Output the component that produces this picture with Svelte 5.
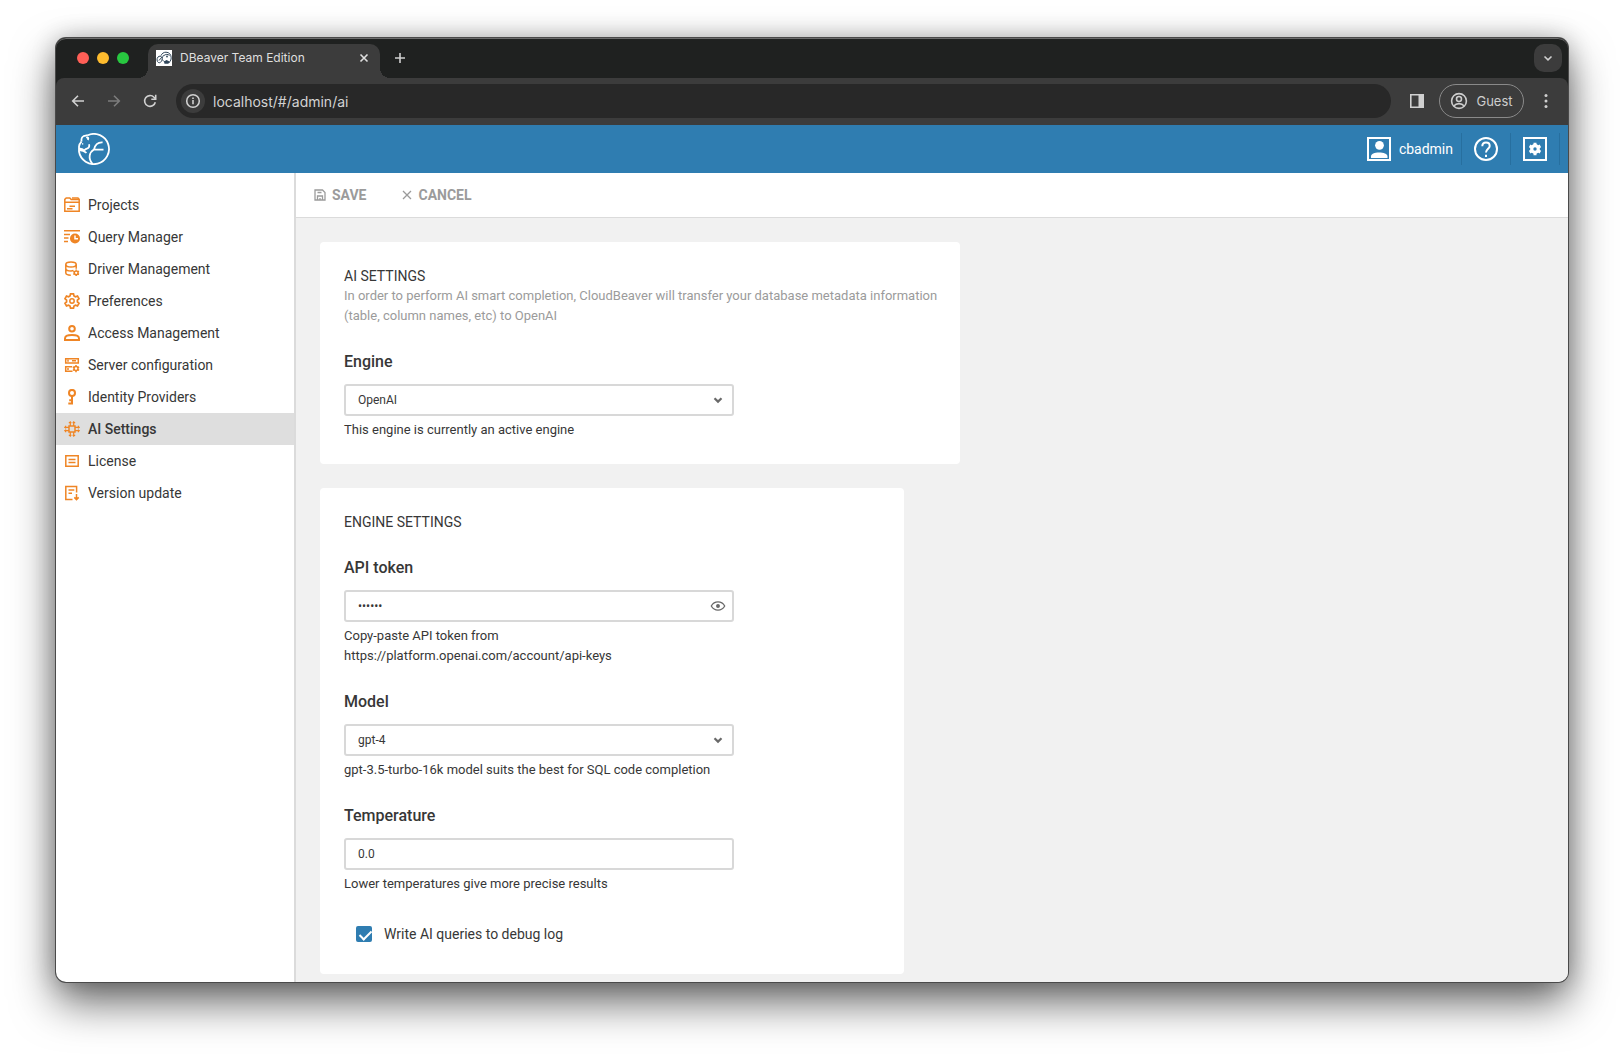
<script lang="ts">
  interface NavItem {
    label: string;
    icon: string;
  }

  const navItems: NavItem[] = [
    { label: "Projects", icon: "projects" },
    { label: "Query Manager", icon: "query" },
    { label: "Driver Management", icon: "driver" },
    { label: "Preferences", icon: "preferences" },
    { label: "Access Management", icon: "access" },
    { label: "Server configuration", icon: "server" },
    { label: "Identity Providers", icon: "identity" },
    { label: "AI Settings", icon: "ai" },
    { label: "License", icon: "license" },
    { label: "Version update", icon: "version" },
  ];

  let active = $state("AI Settings");
  let engine = $state("OpenAI");
  let token = $state("secret");
  let showToken = $state(false);
  let model = $state("gpt-4");
  let temperature = $state("0.0");
  let debugLog = $state(true);

  const select = (event: MouseEvent, label: string) => {
    event.preventDefault();
    active = label;
  };
</script>

{#snippet navIcon(name: string)}
  <svg class="nav-icon" viewBox="0 0 16 16" aria-hidden="true">
    {#if name === "projects"}
      <path d="M.8 14.2V2.4L2.2 1h3.6l1.4 1.6h8v11.6z" />
      <path d="M.8 5.2h14.4M8 1h6l1.2 1.6M5.5 9.2h5.5M3 11.8h5.5" />
    {:else if name === "query"}
      <path d="M0 1.7h16M0 5.5h6M0 9h4.5M0 12.5h4" />
      <circle class="solid" cx="11" cy="9.5" r="5" />
      <path class="cut" d="M11 6.5v3.3h3" />
    {:else if name === "driver"}
      <ellipse cx="7" cy="3.4" rx="5.2" ry="2.5" />
      <path d="M1.8 3.4v8.4c0 1.4 2.2 2.4 5 2.4M12.2 3.4v4.4M1.8 7.4c0 1.4 2.3 2.5 5.2 2.5 1 0 1.8-.1 2.5-.4" />
      <circle cx="12.2" cy="11.8" r="1.9" />
      <path d="M12.2 8.6v1M12.2 14v1M9.3 10.3l1 .5M14 13l1 .5M9.3 13.4l1-.5M14 10.7l1-.5" />
    {:else if name === "preferences"}
      <path stroke-width="1.7" d="M6.5.9h3l.5 2.1 1.4.8 2.1-.7 1.5 2.6-1.6 1.5v1.6l1.6 1.5-1.5 2.6-2.1-.7-1.4.8-.5 2.1h-3L6 13l-1.400-.8-2.100.7L1 10.300l1.600-1.500V7.200L1 5.700l1.500-2.600 2.100.7L6 3z" />
      <circle cx="8" cy="8" r="2.2" />
    {:else if name === "access"}
      <circle cx="8" cy="3.8" r="2.8" stroke-width="2" />
      <path stroke-width="2" d="M1 15v-1.6c0-2.2 3.200-3.400 7-3.400s7 1.200 7 3.400V15z" />
    {:else if name === "server"}
      <path d="M1.7 1.7h12.6v4.200H1.7zM8.5 14.2H1.7V9.8h6.5M8 3.8h4M4 2.8v2M4 11v2" />
      <circle cx="12" cy="11.6" r="2" />
      <path d="M12 8v1.4M12 14v1.3M8.9 9.8l1.3.7M13.8 12.7l1.3.7M8.9 13.4l1.3-.7M13.8 10.5l1.3-.7" />
    {:else if name === "identity"}
      <circle cx="8" cy="3.9" r="3" stroke-width="2" />
      <path stroke-width="2" d="M8 7v8.6M8 14.4H4.3M8 11.2H5.2" />
    {:else if name === "ai"}
      <path d="M5 5h6v6H5z" />
      <path
        stroke-width="1.2"
        d="M6.300 5V.2M9.700 5V.2M4.800 1.600h2.600M8.600 1.600h2.600M6.300 11v4.800M9.700 11v4.800M4.800 14.400h2.600M8.600 14.400h2.600M5 6.300H.2M5 9.700H.2M1.600 4.800v2.600M1.600 8.600v2.600M11 6.300h4.800M11 9.700h4.800M14.400 4.800v2.600M14.400 8.600v2.600"
      />
    {:else if name === "license"}
      <path d="M1.8 2.8h12.4v10.4H1.8zM4.5 6.5h7M4.5 9.4h7" />
    {:else}
      <path d="M8.5 14.5H1.8V1.5h10.8v6M4.5 5h5.8M4.5 8.2H8M12.5 9v5.600M10.3 12.4l2.2 2.2 2.2-2.2" />
    {/if}
  </svg>
{/snippet}

{#snippet chevron()}
  <svg class="field-icon" viewBox="0 0 16 16" aria-hidden="true">
    <path d="M4.5 6.2 8 9.6l3.5-3.4" fill="none" stroke="#696969" stroke-width="2.2" />
  </svg>
{/snippet}

<div class="desktop">
  <div class="window">
    <div class="tab-strip">
      <div class="lights">
        <button class="light close" aria-label="Close window"></button>
        <button class="light minimize" aria-label="Minimize window"></button>
        <button class="light zoom" aria-label="Zoom window"></button>
      </div>
      <div class="tab">
        <svg class="favicon" viewBox="0 0 16 16" aria-hidden="true">
          <path d="M0 0h16v16H0z" fill="#fff" />
          <g fill="none" stroke="#30465a" stroke-width="1">
            <path d="M5 5.6C5.8 3.5 7.7 2.2 10 2.2c3.3 0 5.2 2.6 5.2 5.6 0 1.6-.6 3-1.7 4.2" />
            <path d="M6.2 7.6C5.2 6 3.2 5.7 2 7c-1.4 1.5-1.3 4.6.4 5.5 1.5.8 3-.6 3.5-2.3.5-1.9.6-3.7 1.7-5" />
            <path d="M8 5.5c1.4-1.3 4-1.6 5.5 0M6.5 9.5c.8 1.8 2 2.7 3.5 2.5M3 10.5l3-3.5" />
          </g>
          <path d="M8 11.5l2.5-1.5 2.5 1.2 1 1.3-2 1.3H8.5z" fill="#30465a" />
          <circle cx="11" cy="6.5" r=".9" fill="#30465a" />
        </svg>
        <span class="tab-title">DBeaver Team Edition</span>
        <button class="tab-close" aria-label="Close tab">
          <svg viewBox="0 0 16 16"><path d="m4.5 4.5 7 7m0-7-7 7" /></svg>
        </button>
      </div>
      <button class="new-tab" aria-label="New tab">
        <svg viewBox="0 0 16 16"><path d="M8 3v10M3 8h10" /></svg>
      </button>
      <button class="tab-search" aria-label="Search tabs">
        <svg viewBox="0 0 16 16"><path d="m4.5 6.5 3.5 3.3 3.5-3.3" /></svg>
      </button>
    </div>

    <div class="toolbar">
      <button class="tool" aria-label="Back">
        <svg viewBox="0 0 16 16"><path d="M14 8H3M8 2.7 2.7 8 8 13.3" /></svg>
      </button>
      <button class="tool muted" aria-label="Forward">
        <svg viewBox="0 0 16 16"><path d="M2 8h11M8 2.7 13.3 8 8 13.3" /></svg>
      </button>
      <button class="tool" aria-label="Reload">
        <svg viewBox="0 0 16 16">
          <path d="M13.3 9.2A5.4 5.4 0 1 1 12 4.3l1.6 1.6" />
          <path d="M13.7 1.8v4.4H9.3" />
        </svg>
      </button>
      <div class="omnibox">
        <button class="site-info" aria-label="View site information">
          <svg viewBox="0 0 16 16">
            <circle cx="8" cy="8" r="6.3" />
            <path d="M8 7v4.2M8 4.4v1.6" />
          </svg>
        </button>
        <input class="url" type="text" aria-label="Address" value="localhost/#/admin/ai" />
      </div>
      <button class="side-panel" aria-label="Side panel">
        <svg viewBox="0 0 16 16">
          <path d="M1.8 1.8h12.4v12.4H1.8z" />
          <path d="M9.5 1.5h5v13h-5z" fill="currentColor" stroke="none" />
        </svg>
      </button>
      <button class="guest">
        <svg viewBox="0 0 18 18" aria-hidden="true">
          <circle cx="9" cy="9" r="7.4" />
          <circle cx="9" cy="7" r="2.5" />
          <path d="M3.8 14c1.4-1.7 3-2.4 5.2-2.4s3.8.7 5.2 2.4" />
        </svg>
        Guest
      </button>
      <button class="menu" aria-label="Menu">
        <svg viewBox="0 0 16 16">
          <circle cx="8" cy="2.6" r="1.5" />
          <circle cx="8" cy="8" r="1.5" />
          <circle cx="8" cy="13.4" r="1.5" />
        </svg>
      </button>
    </div>

    <header class="app-header">
      <a class="logo" href="#/" aria-label="Home">
        <svg viewBox="0 0 32 32" aria-hidden="true">
          <path d="M9.800 2.200A15.100 15.100 0 1 1 1 18.500V13.500C1.200 11.500 2.300 9.800 3.500 8.600" />
          <path d="M3.500 8.600C3.200 6 3.800 4 5.500 3.200L9.800 2.200M8.400 5c1.600-1.300 2.500.2 1.400 1.900" />
          <path d="M4.200 10.900h1M1 15.300l3.600.9 1.200 1.400M11 11.300c.8 2.200-.2 4.100-2.800 4.600l-2.400 1.700M1.200 17c3 .2 5.400 1.200 7.300 2.900" />
          <path d="M24.600 9.400c-4.700-.3-7.500 2.200-8.600 7.100-4.700 2.700-6.300 8.800-1.400 14.600M15.500 16.700h10" />
        </svg>
      </a>
      <div class="account">
        <button class="user">
          <svg viewBox="0 0 24 24" aria-hidden="true">
            <path d="M1 1h22v22H1z" fill="none" stroke="currentColor" stroke-width="2" />
            <circle cx="12.5" cy="8.3" r="4.4" fill="currentColor" />
            <path d="M4 21v-1.5C4 16.8 7.5 15.5 12 15.5s8.5 1.3 8.5 4V21z" fill="currentColor" />
          </svg>
          cbadmin
        </button>
        <button class="header-button" aria-label="Help">
          <svg viewBox="0 0 24 24" fill="none" stroke="currentColor" stroke-width="2">
            <circle cx="12" cy="12" r="11" />
            <path d="M8.3 9.3C8.3 6.9 9.9 5.6 12 5.6s3.7 1.3 3.7 3.4c0 2.7-3.7 3-3.7 6.6M12 17.8v2.2" />
          </svg>
        </button>
        <button class="header-button" aria-label="Administration">
          <svg viewBox="0 0 24 24">
            <path d="M1 1h22v22H1z" fill="none" stroke="currentColor" stroke-width="2" />
            <circle cx="12" cy="12" r="3.3" fill="none" stroke="currentColor" stroke-width="3.2" />
            <path d="M12 5.8v12.4M6.6 8.9l10.8 6.2M6.6 15.1l10.8-6.2" stroke="currentColor" stroke-width="3" />
            <circle cx="12" cy="12" r="1.7" fill="#2f7db1" />
          </svg>
        </button>
      </div>
    </header>

    <div class="body">
      <nav class="sidebar" aria-label="Administration">
        {#each navItems as item}
          <a
            href="#/admin"
            class="nav-item"
            class:active={item.label === active}
            aria-current={item.label === active ? "page" : undefined}
            onclick={(event) => select(event, item.label)}
          >
            {@render navIcon(item.icon)}
            {item.label}
          </a>
        {/each}
      </nav>

      <main class="main">
        <div class="actions">
          <button class="action">
            <svg viewBox="0 0 12 12" aria-hidden="true">
              <path d="M1 1h7.500L11 3.500V11H1zM3.500 11V7h5v4M3.500 3.500h4M6 9v2" />
            </svg>
            SAVE
          </button>
          <button class="action">
            <svg viewBox="0 0 12 12" aria-hidden="true"><path d="m2 2 8 8m0-8-8 8" /></svg>
            CANCEL
          </button>
        </div>

        <div class="content">
          <section class="card wide">
            <div>
              <h2>AI SETTINGS</h2>
              <p class="description">
                In order to perform AI smart completion, CloudBeaver will transfer your database
                metadata information (table, column names, etc) to OpenAI
              </p>
            </div>
            <div class="field">
              <label for="engine">Engine</label>
              <div class="control">
                <select id="engine" bind:value={engine}>
                  <option>OpenAI</option>
                </select>
                {@render chevron()}
              </div>
              <p class="hint">This engine is currently an active engine</p>
            </div>
          </section>

          <section class="card">
            <h2>ENGINE SETTINGS</h2>
            <div class="field">
              <label for="token">API token</label>
              <div class="control">
                <input id="token" type={showToken ? "text" : "password"} bind:value={token} />
                <button
                  class="field-icon"
                  aria-label="Show token"
                  onclick={() => (showToken = !showToken)}
                >
                  <svg viewBox="0 0 16 16" fill="none" stroke="#696969" stroke-width="1.3">
                    <path d="M1.3 8C2.8 5.3 5.2 3.9 8 3.9s5.2 1.4 6.7 4.1c-1.5 2.7-3.9 4.1-6.7 4.1S2.8 10.7 1.3 8z" />
                    <circle cx="8" cy="8" r="1.3" fill="#696969" />
                  </svg>
                </button>
              </div>
              <p class="hint">Copy-paste API token from https://platform.openai.com/account/api-keys</p>
            </div>
            <div class="field">
              <label for="model">Model</label>
              <div class="control">
                <select id="model" bind:value={model}>
                  <option>gpt-4</option>
                  <option>gpt-3.5-turbo-16k</option>
                </select>
                {@render chevron()}
              </div>
              <p class="hint">gpt-3.5-turbo-16k model suits the best for SQL code completion</p>
            </div>
            <div class="field">
              <label for="temperature">Temperature</label>
              <div class="control">
                <input id="temperature" type="text" bind:value={temperature} />
              </div>
              <p class="hint">Lower temperatures give more precise results</p>
            </div>
            <label class="checkbox">
              <input type="checkbox" bind:checked={debugLog} />
              Write AI queries to debug log
            </label>
          </section>
        </div>
      </main>
    </div>
  </div>
</div>

<style>
  :global(body) {
    background: #fff;
  }

  * {
    box-sizing: border-box;
  }

  button {
    display: flex;
    align-items: center;
    justify-content: center;
    margin: 0;
    padding: 0;
    border: 0;
    background: none;
    color: inherit;
    font: inherit;
  }

  svg {
    display: block;
    flex: none;
  }

  h2,
  p {
    margin: 0;
  }

  .desktop {
    display: flex;
    min-height: 100vh;
    padding: 38px 56px 74px;
  }

  .window {
    flex: 1;
    display: flex;
    flex-direction: column;
    min-width: 0;
    overflow: hidden;
    border-radius: 10px;
    background: #1f2120;
    box-shadow:
      0 0 0 1px #4a4a4a,
      0 20px 44px rgba(0, 0, 0, 0.6),
      0 0 24px rgba(0, 0, 0, 0.24);
    font-family: Roboto, sans-serif;
    font-size: 14px;
    color: #373737;
  }

  /* browser chrome */
  .tab-strip,
  .toolbar {
    font-family: Inter, sans-serif;
    color: #d0d0d0;
  }

  .tab-strip svg,
  .toolbar svg {
    width: 16px;
    height: 16px;
    fill: none;
    stroke: currentColor;
    stroke-width: 1.6;
  }

  .tab-strip {
    display: flex;
    align-items: flex-start;
    height: 40px;
    padding: 5px 6px 0 21px;
    border-top: 1px solid #6c6c6c;
    border-radius: 10px 10px 0 0;
  }

  .lights {
    display: flex;
    gap: 8px;
    margin-right: 19px;
    padding-top: 8px;
  }

  .light {
    width: 12px;
    height: 12px;
    border-radius: 50%;
  }

  .light.close {
    background: #ff5f57;
  }

  .light.minimize {
    background: #febc2e;
  }

  .light.zoom {
    background: #28c840;
  }

  .tab {
    position: relative;
    display: flex;
    align-items: flex-start;
    gap: 8px;
    width: 232px;
    height: 34px;
    padding: 6px 8px 0;
    border-radius: 10px 10px 0 0;
    background: #3c3c3c;
    font-size: 12px;
    line-height: 16px;
    color: #dfdfdf;
  }

  .tab::before,
  .tab::after {
    content: "";
    position: absolute;
    bottom: 0;
    width: 10px;
    height: 10px;
  }

  .tab::before {
    right: 100%;
    background: radial-gradient(circle at 0 0, transparent 10px, #3c3c3c 10px);
  }

  .tab::after {
    left: 100%;
    background: radial-gradient(circle at 100% 0, transparent 10px, #3c3c3c 10px);
  }

  .tab .favicon {
    stroke: none;
  }

  .tab-title {
    flex: 1;
  }

  .new-tab {
    width: 28px;
    height: 28px;
    margin-left: 6px;
  }

  .tab-search {
    width: 28px;
    height: 28px;
    margin-left: auto;
    border-radius: 10px;
    background: #3c3c3c;
  }

  .toolbar {
    display: flex;
    align-items: center;
    height: 47px;
    padding: 0 14px 1px;
    border-radius: 8px 8px 0 0;
    background: #3c3c3c;
  }

  .tool {
    width: 16px;
    height: 34px;
    margin-right: 20px;
  }

  .tool:nth-child(3) {
    margin-right: 18px;
  }

  .tool.muted {
    color: #7c7c7c;
  }

  .omnibox {
    flex: 1;
    display: flex;
    align-items: center;
    gap: 8px;
    height: 34px;
    margin-right: 18px;
    padding: 0 5px;
    border-radius: 17px;
    background: #282828;
  }

  .site-info {
    width: 24px;
    height: 24px;
    border-radius: 50%;
    background: #3c3c3c;
  }

  .url {
    flex: 1;
    min-width: 0;
    padding: 0;
    border: 0;
    background: none;
    color: #d3d3d3;
    font-family: inherit;
    font-size: 14px;
  }

  .side-panel {
    margin-right: 14px;
  }

  .guest {
    gap: 8px;
    width: 85px;
    height: 34px;
    margin-right: 14px;
    border: 1px solid #8a8a8a;
    border-radius: 17px;
    font-size: 13px;
    color: #cdcdcd;
  }

  .toolbar .guest svg {
    width: 18px;
    height: 18px;
  }

  .toolbar .menu svg {
    fill: currentColor;
    stroke: none;
  }

  /* application */
  .app-header {
    display: flex;
    align-items: center;
    justify-content: space-between;
    height: 48px;
    padding: 0 8px 0 22px;
    background: #2f7db1;
    color: #fff;
  }

  .logo svg {
    width: 32px;
    height: 32px;
    fill: none;
    stroke: #fff;
    stroke-width: 1.8;
  }

  .account {
    display: flex;
    align-items: center;
  }

  .account button {
    height: 32px;
    border-right: 1px solid #276f9f;
  }

  .account svg {
    width: 24px;
    height: 24px;
  }

  .user {
    gap: 8px;
    padding-right: 8px;
  }

  .header-button {
    width: 49px;
  }

  .body {
    flex: 1;
    display: flex;
    background: #fff;
  }

  .sidebar {
    flex: none;
    width: 240px;
    padding-top: 16px;
    border-right: 2px solid #dbdbdb;
  }

  .nav-item {
    display: flex;
    align-items: center;
    gap: 8px;
    height: 32px;
    padding: 0 8px;
    color: #373737;
    text-decoration: none;
  }

  .nav-item.active {
    background: #dedede;
    font-weight: 500;
  }

  .nav-icon {
    width: 16px;
    height: 16px;
    fill: none;
    stroke: #ef8525;
    stroke-width: 1.5;
  }

  .nav-icon .solid {
    fill: #ef8525;
    stroke: none;
  }

  .nav-icon .cut {
    stroke: #fff;
  }

  .main {
    flex: 1;
    display: flex;
    flex-direction: column;
    min-width: 0;
    background: #f1f1f1;
  }

  .actions {
    display: flex;
    gap: 34px;
    height: 45px;
    padding: 0 18px;
    border-bottom: 1px solid #dbdbdb;
    background: #fff;
  }

  .action {
    gap: 6px;
    font-weight: 700;
    color: #9b9b9b;
  }

  .action svg {
    width: 12px;
    height: 12px;
    fill: none;
    stroke: currentColor;
    stroke-width: 1.3;
  }

  .content {
    display: flex;
    flex-direction: column;
    gap: 24px;
    padding: 24px 24px 8px;
  }

  .card {
    display: flex;
    flex-direction: column;
    gap: 24px;
    width: 100%;
    max-width: 584px;
    padding: 24px;
    border-radius: 4px;
    background: #fff;
  }

  .card.wide {
    max-width: 640px;
    padding-right: 16px;
  }

  h2 {
    font-size: 14px;
    font-weight: 400;
    line-height: 20px;
  }

  .description,
  .hint {
    font-size: 13px;
    line-height: 20px;
  }

  .description {
    color: #9b9b9b;
  }

  .field {
    max-width: 390px;
  }

  .field label {
    display: block;
    margin-bottom: 10px;
    font-size: 16px;
    font-weight: 500;
    line-height: 24px;
  }

  .control {
    position: relative;
    margin-bottom: 4px;
  }

  .control input,
  .control select {
    display: block;
    width: 100%;
    height: 32px;
    padding: 0 36px 0 12px;
    border: 2px solid #d8d8d8;
    border-radius: 3px;
    background: #fff;
    color: #373737;
    font-family: inherit;
    font-size: 12px;
    appearance: none;
  }

  .field-icon {
    position: absolute;
    top: 8px;
    right: 8px;
    width: 16px;
    height: 16px;
    pointer-events: none;
  }

  button.field-icon {
    pointer-events: auto;
  }

  button.field-icon svg {
    width: 16px;
    height: 16px;
  }

  .checkbox {
    display: flex;
    align-items: center;
    gap: 12px;
    height: 32px;
    padding-left: 12px;
  }

  .checkbox input {
    position: relative;
    width: 16px;
    height: 16px;
    margin: 0;
    border: 2px solid #9b9b9b;
    border-radius: 2px;
    appearance: none;
  }

  .checkbox input:checked {
    border-color: #2f7db1;
    background: #2f7db1;
  }

  .checkbox input:checked::after {
    content: "";
    position: absolute;
    left: 4px;
    top: 0;
    width: 5px;
    height: 10px;
    border: solid #fff;
    border-width: 0 2px 2px 0;
    transform: rotate(45deg);
  }
</style>
